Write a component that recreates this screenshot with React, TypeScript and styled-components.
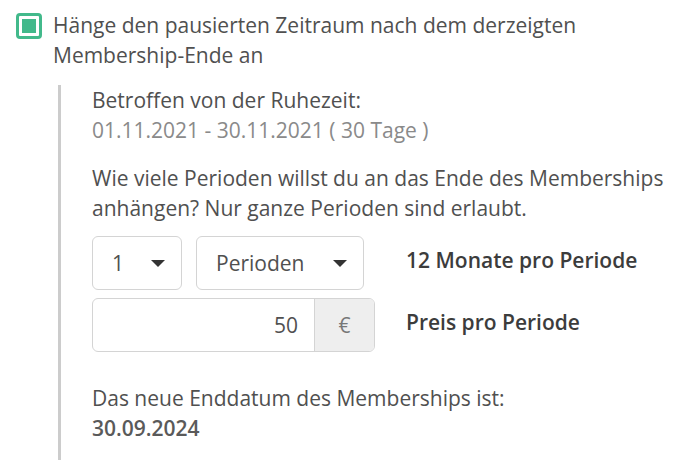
import { useState } from 'react';
import styled, { createGlobalStyle } from 'styled-components';

const GlobalStyle = createGlobalStyle`
	body {
		margin: 0;
		background: #fff;
		font-family: 'Open Sans', 'Noto Sans', sans-serif;
		font-size: 21px;
		line-height: 30px;
		color: #505050;
	}
`;

const Wrapper = styled.div`
	padding: 10px 0 0 16px;
`;

const CheckRow = styled.label`
	display: flex;
	align-items: flex-start;
	gap: 11px;
	cursor: pointer;
`;

const CheckBox = styled.span<{ checked: boolean }>`
	flex: none;
	box-sizing: border-box;
	width: 26px;
	height: 26px;
	margin-top: 3px;
	border: 3px solid #42b98b;
	border-radius: 4px;
	padding: 3px;
	background: #fff;

	&::after {
		content: '';
		display: block;
		width: 100%;
		height: 100%;
		background: ${p => (p.checked ? '#42b98b' : 'transparent')};
	}
`;

const Section = styled.div`
	margin: 15px 0 0 42px;
	border-left: 3px solid #cccccc;
	padding: 0 0 17px 31px;
`;

const Text = styled.p<{ muted?: boolean; strong?: boolean; gap?: number }>`
	margin: ${p => p.gap ?? 0}px 0 0;
	color: ${p => (p.muted ? '#8a8a8a' : p.strong ? '#5a5a5a' : '#505050')};
	font-weight: ${p => (p.strong ? 600 : 400)};
`;

const FormGrid = styled.div`
	display: grid;
	grid-template-columns: 283px auto;
	column-gap: 31px;
	row-gap: 8px;
	align-items: center;
	margin-top: 13px;
`;

const SelectRow = styled.div`
	display: flex;
	gap: 14px;
`;

const Select = styled.div<{ width: number }>`
	box-sizing: border-box;
	width: ${p => p.width}px;
	height: 54px;
	border: 1px solid #d4d4d4;
	border-radius: 6px;
	display: flex;
	align-items: center;
	justify-content: space-between;
	padding: 0 16px 0 19px;
	color: #505050;
`;

const Caret = styled.span`
	width: 0;
	height: 0;
	border-left: 7px solid transparent;
	border-right: 7px solid transparent;
	border-top: 7px solid #333;
`;

const InputGroup = styled.div`
	box-sizing: border-box;
	height: 54px;
	display: flex;
	border: 1px solid #d4d4d4;
	border-radius: 6px;
	overflow: hidden;
`;

const Amount = styled.div`
	flex: 1;
	display: flex;
	align-items: center;
	justify-content: flex-end;
	padding-right: 16px;
`;

const Addon = styled.div`
	width: 59px;
	border-left: 1px solid #d4d4d4;
	background: #eeeeee;
	display: flex;
	align-items: center;
	justify-content: center;
	color: #777;
`;

const FieldLabel = styled.div`
	padding-bottom: 7px;
	font-weight: 600;
	color: #3c3c3c;
`;

function App() {
	const [checked, setChecked] = useState(true);

	return (
		<Wrapper>
			<GlobalStyle />
			<CheckRow onClick={() => setChecked(!checked)}>
				<CheckBox checked={checked} />
				<span>
					Hänge den pausierten Zeitraum nach dem derzeigten
					<br />
					Membership-Ende an
				</span>
			</CheckRow>
			<Section>
				<Text>Betroffen von der Ruhezeit:</Text>
				<Text muted>01.11.2021 - 30.11.2021 ( 30 Tage )</Text>
				<Text gap={18}>
					Wie viele Perioden willst du an das Ende des Memberships
					<br />
					anhängen? Nur ganze Perioden sind erlaubt.
				</Text>
				<FormGrid>
					<SelectRow>
						<Select width={90}>
							1
							<Caret />
						</Select>
						<Select width={168}>
							Perioden
							<Caret />
						</Select>
					</SelectRow>
					<FieldLabel>12 Monate pro Periode</FieldLabel>
					<InputGroup>
						<Amount>50</Amount>
						<Addon>€</Addon>
					</InputGroup>
					<FieldLabel>Preis pro Periode</FieldLabel>
				</FormGrid>
				<Text gap={31}>Das neue Enddatum des Memberships ist:</Text>
				<Text strong>30.09.2024</Text>
			</Section>
		</Wrapper>
	);
}

export default App;
